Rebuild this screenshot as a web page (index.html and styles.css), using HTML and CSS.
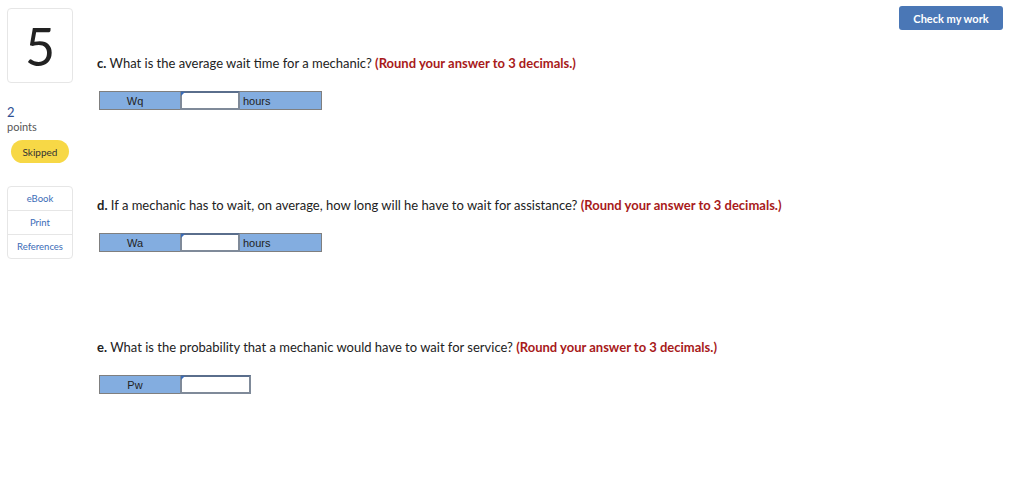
FILE: index.html
```html
<!DOCTYPE html>
<html lang="en">
<head>
  <meta charset="UTF-8">
  <title>Question 5</title>
  <link rel="stylesheet" href="styles.css">
</head>
<body>
  <div class="page">
    <aside class="side">
      <div class="qnum">5</div>
      <div class="pts">
        <span class="pts-val">2</span>
        <span class="pts-lbl">points</span>
      </div>
      <span class="badge">Skipped</span>
      <ul class="tools">
        <li><a href="#">eBook</a></li>
        <li><a href="#">Print</a></li>
        <li><a href="#">References</a></li>
      </ul>
    </aside>

    <main class="main">
      <section class="part">
        <p class="q"><b>c.</b> What is the average wait time for a mechanic? <span class="hint">(Round your answer to 3 decimals.)</span></p>
        <div class="ans">
          <span class="cell lbl">Wq</span>
          <span class="cell inp"></span>
          <span class="cell unit">hours</span>
        </div>
      </section>

      <section class="part">
        <p class="q"><b>d.</b> If a mechanic has to wait, on average, how long will he have to wait for assistance? <span class="hint">(Round your answer to 3 decimals.)</span></p>
        <div class="ans">
          <span class="cell lbl">Wa</span>
          <span class="cell inp"></span>
          <span class="cell unit">hours</span>
        </div>
      </section>

      <section class="part">
        <p class="q"><b>e.</b> What is the probability that a mechanic would have to wait for service? <span class="hint">(Round your answer to 3 decimals.)</span></p>
        <div class="ans">
          <span class="cell lbl">Pw</span>
          <span class="cell inp wide"></span>
        </div>
      </section>
    </main>

    <div class="top-actions">
      <button class="check">Check my work</button>
    </div>
  </div>
</body>
</html>
```

FILE: styles.css
```css
body {
  margin: 0;
  background: #fff;
  font-family: Lato, "Open Sans", sans-serif;
  color: #222;
}
.page {
  display: flex;
  align-items: flex-start;
}

/* left column */
.side {
  width: 66px;
  margin-left: 7px;
  padding-top: 8px;
  display: flex;
  flex-direction: column;
  align-items: flex-start;
}
.qnum {
  box-sizing: border-box;
  width: 66px;
  height: 75px;
  border: 1px solid #e6e6e6;
  border-radius: 4px;
  display: flex;
  align-items: center;
  justify-content: center;
  font-size: 52px;
  font-weight: 400;
  color: #222;
}
.pts {
  margin-top: 22px;
  display: flex;
  flex-direction: column;
  line-height: 15px;
}
.pts-val {
  font-size: 13px;
  color: #2e4f92;
}
.pts-lbl {
  font-size: 11px;
  line-height: 13px;
  color: #555;
}
.badge {
  margin: 7px 0 0 4px;
  width: 58px;
  height: 23px;
  border-radius: 12px;
  background: #f7d846;
  font-size: 10px;
  color: #333;
  display: flex;
  align-items: center;
  justify-content: center;
}
.tools {
  list-style: none;
  margin: 23px 0 0;
  padding: 0;
  width: 66px;
  box-sizing: border-box;
  border: 1px solid #e6e6e6;
  border-radius: 4px;
}
.tools li {
  height: 23px;
  display: flex;
  align-items: center;
  justify-content: center;
  border-top: 1px solid #e6e6e6;
}
.tools li:first-child {
  border-top: none;
}
.tools a {
  font-size: 9.5px;
  color: #3b6cb7;
  text-decoration: none;
}

/* questions */
.main {
  flex: 1;
  margin-left: 24px;
  padding-top: 55px;
}
.part {
  height: 142px;
}
.q {
  margin: 0;
  font-size: 13px;
  line-height: 16px;
  color: #222;
}
.hint {
  color: #a81a1a;
  font-weight: bold;
}
.ans {
  display: flex;
  margin: 20px 0 0 2px;
  font-family: "Liberation Sans", Arial, sans-serif;
  font-size: 11px;
}
.cell {
  box-sizing: border-box;
  height: 19px;
  border: 1px solid #7f7f7f;
  display: flex;
  align-items: center;
}
.lbl {
  width: 82px;
  padding-right: 10px;
  background: #83ade0;
  justify-content: center;
}
.inp {
  position: relative;
  width: 60px;
  margin-left: -1px;
  background: #fff;
  border: 2px solid #7f8a99;
  border-top-color: #5a6e8c;
}
.inp.wide {
  width: 71px;
}
.inp::before {
  content: "";
  position: absolute;
  left: -1px;
  top: -1px;
  border-top: 4px solid #3b6cb7;
  border-right: 4px solid transparent;
}
.unit {
  width: 83px;
  margin-left: -1px;
  background: #83ade0;
  padding-left: 3px;
}

/* top right */
.top-actions {
  padding: 6px 21px 0 0;
}
.check {
  width: 104px;
  height: 24px;
  border: none;
  border-radius: 3px;
  background: #4a77b6;
  color: #fff;
  font-family: Lato, "Open Sans", sans-serif;
  font-size: 11px;
  font-weight: bold;
  cursor: pointer;
}
```
